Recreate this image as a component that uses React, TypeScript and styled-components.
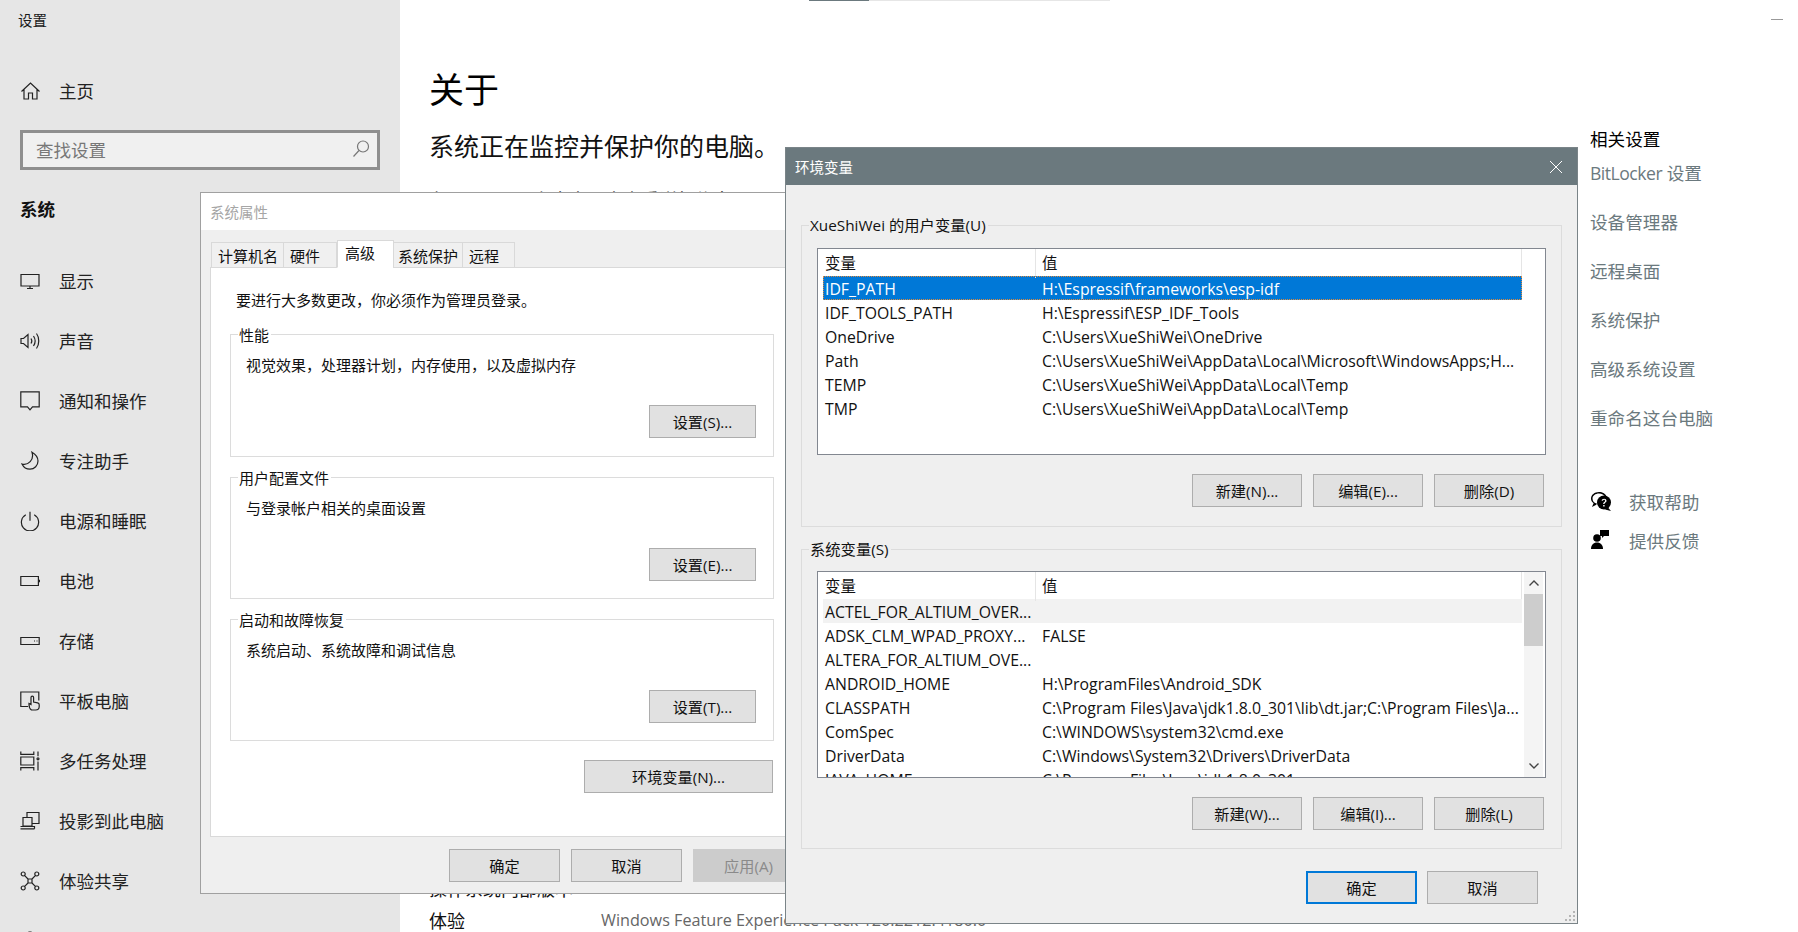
import React from 'react';
import styled, { createGlobalStyle } from 'styled-components';

const UI_FONT = `"Open Sans", "Noto Sans CJK SC", sans-serif`;

const GlobalStyle = createGlobalStyle`
  html, body {
    margin: 0;
    padding: 0;
    background: #fff;
    overflow: hidden;
  }
  * {
    box-sizing: border-box;
  }
  body {
    font-family: ${UI_FONT};
    color: #1a1a1a;
  }
`;

const Shell = styled.div`
  position: relative;
  display: flex;
  width: 1798px;
  height: 932px;
  overflow: hidden;
  background: #fff;
`;

/* settings sidebar */
const Sidebar = styled.nav`
  width: 400px;
  height: 932px;
  flex: none;
  background: #e6e6e6;
  overflow: hidden;
`;

const AppTitle = styled.div`
  height: 40px;
  line-height: 42px;
  padding-left: 18px;
  font-size: 14.5px;
`;

const NavRow = styled.div<{ $first?: boolean }>`
  display: flex;
  align-items: center;
  gap: 19px;
  height: 60px;
  padding-left: 20px;
  font-size: 17.5px;
  color: #222;
  margin-top: ${({ $first }) => ($first ? '21px' : '0')};
`;

const NavLabel = styled.span`
  margin-bottom: 1px;
`;

const SearchBox = styled.div`
  display: flex;
  align-items: center;
  justify-content: space-between;
  width: 360px;
  height: 40px;
  margin: 9px 0 0 20px;
  padding: 0 6px 2px 13px;
  border: 3px solid #8f8f8f;
  background: #f0f0f0;
  font-size: 17.5px;
  color: #777;
`;

const SectionHead = styled.div`
  height: 40px;
  line-height: 40px;
  margin: 19px 0 22px 20px;
  font-size: 17.5px;
  font-weight: 700;
  color: #111;
`;

const Glyph = styled.svg`
  width: 20px;
  height: 20px;
  flex: none;
  fill: none;
  stroke: currentColor;
  stroke-width: 1.2;
`;

const SolidGlyph = styled.svg`
  width: 22px;
  height: 22px;
  flex: none;
  fill: #000;
`;

/* main about page */
const Main = styled.main`
  display: flex;
  flex-direction: column;
  flex: 1;
  height: 932px;
  padding-left: 29px;
  overflow: hidden;
`;

const LoadTrack = styled.div`
  width: 301px;
  height: 1px;
  margin-left: 380px;
  background: #e6e6e6;
`;

const LoadFill = styled.div`
  width: 20%;
  height: 1px;
  background: #6b797e;
`;

const Heading = styled.h1`
  margin: 66px 0 0;
  font-size: 35px;
  line-height: 46px;
  font-weight: 400;
  color: #000;
`;

const SubHeading = styled.div`
  margin-top: 16px;
  font-size: 25px;
  line-height: 34px;
  color: #111;
`;

const SecurityLink = styled.div`
  margin-top: 24px;
  font-size: 18px;
  line-height: 26px;
  color: #333;
`;

const SpecList = styled.div`
  margin-top: auto;
  margin-bottom: -4px;
`;

const SpecRow = styled.div`
  display: flex;
  height: 32px;
  align-items: center;
  font-size: 18px;
`;

const SpecKey = styled.span`
  width: 172px;
  flex: none;
  color: #111;
`;

const SpecValue = styled.span`
  font-size: 16.2px;
  color: #666;
  white-space: nowrap;
`;

/* right hand column */
const Aside = styled.aside`
  width: 238px;
  flex: none;
  padding-left: 30px;
`;

const MinimizeMark = styled.div`
  width: 12px;
  height: 1px;
  margin: 19px 0 0 181px;
  background: #999;
`;

const AsideTitle = styled.div`
  margin-top: 106px;
  font-size: 17.6px;
  line-height: 26px;
  color: #000;
`;

const AsideLinks = styled.div`
  display: flex;
  flex-direction: column;
  gap: 23px;
  margin-top: 8px;
`;

const AsideLink = styled.div`
  font-size: 17.6px;
  line-height: 26px;
  color: #6b797e;
`;

const TightWord = styled.span`
  letter-spacing: -0.5px;
`;

const HelpList = styled.div`
  display: flex;
  flex-direction: column;
  gap: 13px;
  margin-top: 57px;
`;

const HelpRow = styled.div`
  display: flex;
  align-items: center;
  gap: 17px;
  height: 26px;
  font-size: 17.6px;
  color: #6b797e;
`;

/* classic dialogs, free floating over the settings page */
const Dialog = styled.div<{ $left: number; $top: number; $width: number; $height: number; $border: string }>`
  position: absolute;
  left: ${({ $left }) => $left}px;
  top: ${({ $top }) => $top}px;
  width: ${({ $width }) => $width}px;
  height: ${({ $height }) => $height}px;
  display: flex;
  flex-direction: column;
  background: #efefef;
  border: 1px solid ${({ $border }) => $border};
  font-size: 15px;
  color: #111;
`;

const TitleBar = styled.div<{ $active?: boolean }>`
  display: flex;
  align-items: center;
  justify-content: space-between;
  height: 37px;
  flex: none;
  padding: 0 14px 0 9px;
  font-size: 14.5px;
  background: ${({ $active }) => ($active ? '#6b797e' : '#fff')};
  color: ${({ $active }) => ($active ? '#fff' : '#a6a6a6')};
`;

const CloseGlyph = styled.svg`
  width: 14px;
  height: 14px;
  stroke: #fff;
  stroke-width: 1;
  fill: none;
`;

const TabStrip = styled.div`
  display: flex;
  align-items: flex-end;
  height: 28px;
  margin: 10px 0 -1px 11px;
  position: relative;
  z-index: 1;
`;

const Tab = styled.div<{ $active?: boolean; $width: number; $inset: number }>`
  width: ${({ $width }) => $width}px;
  height: ${({ $active }) => ($active ? '28px' : '26px')};
  padding: ${({ $active }) => ($active ? '1px' : '2px')} 0 0 ${({ $inset }) => $inset}px;
  line-height: 23px;
  font-size: 15px;
  background: ${({ $active }) => ($active ? '#fff' : '#f0f0f0')};
  border: 1px solid #d9d9d9;
  border-bottom: ${({ $active }) => ($active ? '1px solid #fff' : '1px solid #d9d9d9')};
  margin-left: ${({ $active }) => ($active ? '0' : '-1px')};
  white-space: nowrap;
`;

const TabPane = styled.div`
  height: 570px;
  margin: 0 10px 0 9px;
  padding: 21px 20px 0 19px;
  background: #fff;
  border: 1px solid #d9d9d9;
`;

const Notice = styled.div`
  height: 20px;
  line-height: 22px;
  margin: 0 0 25px 6px;
`;

const GroupStack = styled.div`
  display: flex;
  flex-direction: column;
  gap: 20px;
`;

const Group = styled.section<{ $height: number }>`
  display: flex;
  flex-direction: column;
  height: ${({ $height }) => $height}px;
  border: 1px solid #dcdcdc;
`;

const Legend = styled.div<{ $bg: string }>`
  width: fit-content;
  height: 20px;
  line-height: 18px;
  margin: -10px 0 0 7px;
  padding: 0 2px 0 1px;
  font-size: 15.3px;
  background: ${({ $bg }) => $bg};
`;

const PaneLegend = styled(Legend)`
  font-size: 15px;
  line-height: 20px;
`;

const GroupText = styled.div`
  height: 20px;
  line-height: 22px;
  margin: 9px 0 0 15px;
`;

const Button = styled.div<{ $width?: number; $primary?: boolean; $disabled?: boolean }>`
  display: flex;
  align-items: center;
  justify-content: center;
  width: ${({ $width }) => $width ?? 111}px;
  height: 33px;
  padding-bottom: 2px;
  flex: none;
  font-size: 15.2px;
  background: ${({ $disabled }) => ($disabled ? '#cccccc' : '#e1e1e1')};
  color: ${({ $disabled }) => ($disabled ? '#8a8a8a' : '#111')};
  border: ${({ $primary, $disabled }) =>
    $primary ? '2px solid #0078d7' : $disabled ? '1px solid #cccccc' : '1px solid #adadad'};
  white-space: nowrap;
`;

const GroupAction = styled.div<{ $bottom: number }>`
  margin: auto 17px ${({ $bottom }) => $bottom}px auto;
`;

const EnvAction = styled.div`
  display: flex;
  justify-content: flex-end;
  margin: 19px 1px 0 0;
`;

const SysFooter = styled.div`
  display: flex;
  gap: 11px;
  margin: 12px 0 0 248px;
`;

const EnvBody = styled.div`
  display: flex;
  flex-direction: column;
  gap: 22px;
  padding: 40px 15px 0 15px;
`;

const ListBox = styled.div<{ $gap: number }>`
  display: flex;
  width: 729px;
  height: 207px;
  margin: ${({ $gap }) => $gap}px 0 0 15px;
  flex: none;
  background: #fff;
  border: 1px solid #828790;
  overflow: hidden;
`;

const ListTable = styled.div`
  width: 699px;
  margin-left: 5px;
  flex: none;
`;

const ListHead = styled.div`
  display: grid;
  grid-template-columns: 213px 1fr;
  height: 27px;
  line-height: 29px;
  font-size: 15.4px;
  border-right: 1px solid #e5e5e5;
`;

const HeadCell = styled.div<{ $second?: boolean }>`
  padding-left: ${({ $second }) => ($second ? '6px' : '2px')};
  border-right: ${({ $second }) => ($second ? 'none' : '1px solid #e5e5e5')};
`;

const ListRow = styled.div<{ $state?: 'selected' | 'hover' }>`
  display: grid;
  grid-template-columns: 213px 1fr;
  height: 24px;
  line-height: 26px;
  font-size: 15.8px;
  white-space: nowrap;
  background: ${({ $state }) => ($state === 'selected' ? '#0078d7' : $state === 'hover' ? '#f2f2f2' : 'transparent')};
  color: ${({ $state }) => ($state === 'selected' ? '#fff' : '#111')};
  outline: ${({ $state }) => ($state === 'selected' ? '1px dotted #e08a3c' : 'none')};
  outline-offset: -1px;
`;

const RowName = styled.div`
  padding-left: 2px;
`;

const RowValue = styled.div`
  padding-left: 6px;
`;

const ScrollBar = styled.div`
  display: flex;
  flex-direction: column;
  width: 19px;
  margin-left: 2px;
  flex: none;
  background: #f4f4f4;
`;

const ScrollArrow = styled.div<{ $end?: boolean }>`
  display: flex;
  align-items: center;
  justify-content: center;
  height: 22px;
  flex: none;
  margin-top: ${({ $end }) => ($end ? 'auto' : '0')};
`;

const ScrollThumb = styled.div`
  height: 52px;
  flex: none;
  background: #cdcdcd;
`;

const Chevron = styled.svg`
  width: 12px;
  height: 8px;
  fill: none;
  stroke: #444;
  stroke-width: 1.4;
`;

const ListActions = styled.div`
  display: flex;
  justify-content: flex-end;
  gap: 11px;
  margin: 19px 17px 0 0;
`;

const EnvFooter = styled.div`
  display: flex;
  justify-content: flex-end;
  gap: 10px;
  margin: 22px 39px 0 0;
`;

const ResizeGrip = styled.svg`
  position: absolute;
  right: 1px;
  bottom: 1px;
  width: 12px;
  height: 12px;
  fill: #b5b5b5;
`;

const navItems: { label: string; d: string }[] = [
  { label: '显示', d: 'M1 3.5h18v11.5H1z M7 17.5h6 M10 15v2.5' },
  { label: '声音', d: 'M1 7.5h2.5L8 3.5v13l-4.5-4H1z M11 7.5c1 1.5 1 3.5 0 5 M13.5 5c2 3 2 7 0 10 M16.5 2.5c3 4 3 11 0 15' },
  { label: '通知和操作', d: 'M.8.8h18.4v15h-6.7L10 18.8l-2.5-3H.8z' },
  { label: '专注助手', d: 'M12 1.2c3.5 2 6 4.8 6 8.8 0 4.5-3.5 8.2-8 8.2-3.5 0-6.5-2-8-5.2 6 1.5 12.5-4 10-11.8z' },
  { label: '电源和睡眠', d: 'M10 .8v9 M5.8 3.8a8.6 8.6 0 1 0 8.4 0' },
  { label: '电池', d: 'M.8 5.5h17.6v9H.8z M19.4 8.8v2.4' },
  { label: '存储', d: 'M.8 6.5h18.4v7H.8z M14 10h1 M16.5 10h1' },
  { label: '平板电脑', d: 'M8 15.5H.8V1h18v8.5 M11.5 19c-1.5-1-2.5-3-2.5-5.5v-1l2 1V6.5a1.3 1.3 0 0 1 2.6 0V11l4 .8c1 .2 1.6 1 1.6 2v1.7c0 2-1.5 3.5-3.5 3.5z' },
  { label: '多任务处理', d: 'M.8.6v2.8h13V.6 M.8 6h13v8H.8z M.8 19.4v-2.8h13v2.8 M18 .6v4.6 M18 10.5v8.9 M17 7.8a1 1 0 1 0 2 0 1 1 0 1 0-2 0z' },
  { label: '投影到此电脑', d: 'M7 6V1.5h12v11h-7.5 M3 6.5h9v8.5H3z M.5 17.8h14 M.5 15.5h14v2.3' },
  { label: '体验共享', d: 'M8 8h4v4H8z M8 8L4.2 4.2 M12 8l3.8-3.8 M8 12l-3.8 3.8 M12 12l3.8 3.8 M1.2 3a2 2 0 1 0 4 0 2 2 0 1 0-4 0z M14.8 3a2 2 0 1 0 4 0 2 2 0 1 0-4 0z M1.2 17a2 2 0 1 0 4 0 2 2 0 1 0-4 0z M14.8 17a2 2 0 1 0 4 0 2 2 0 1 0-4 0z' },
  { label: '剪贴板', d: 'M9 1h2v2H9z M3 3h14v16H3z' },
];

const asideLinks = ['设备管理器', '远程桌面', '系统保护', '高级系统设置', '重命名这台电脑'];

const tabs = [
  { label: '计算机名', width: 73, inset: 6 },
  { label: '硬件', width: 54, inset: 6 },
  { label: '高级', width: 57, inset: 7, active: true },
  { label: '系统保护', width: 70, inset: 4 },
  { label: '远程', width: 53, inset: 6 },
];

const adminNotice = '要进行大多数更改\uFF0C你必须作为管理员登录。';

const sysGroups = [
  {
    title: '性能',
    text: '视觉效果\uFF0C处理器计划\uFF0C内存使用\uFF0C以及虚拟内存',
    action: '设置(S)...',
    height: 123,
    bottom: 18,
  },
  { title: '用户配置文件', text: '与登录帐户相关的桌面设置', action: '设置(E)...', height: 122, bottom: 17 },
  { title: '启动和故障恢复', text: '系统启动、系统故障和调试信息', action: '设置(T)...', height: 122, bottom: 17 },
];

const userVars = [
  ['IDF_PATH', 'H:\\Espressif\\frameworks\\esp-idf'],
  ['IDF_TOOLS_PATH', 'H:\\Espressif\\ESP_IDF_Tools'],
  ['OneDrive', 'C:\\Users\\XueShiWei\\OneDrive'],
  ['Path', 'C:\\Users\\XueShiWei\\AppData\\Local\\Microsoft\\WindowsApps;H...'],
  ['TEMP', 'C:\\Users\\XueShiWei\\AppData\\Local\\Temp'],
  ['TMP', 'C:\\Users\\XueShiWei\\AppData\\Local\\Temp'],
];

const systemVars = [
  ['ACTEL_FOR_ALTIUM_OVER...', ''],
  ['ADSK_CLM_WPAD_PROXY...', 'FALSE'],
  ['ALTERA_FOR_ALTIUM_OVE...', ''],
  ['ANDROID_HOME', 'H:\\ProgramFiles\\Android_SDK'],
  ['CLASSPATH', 'C:\\Program Files\\Java\\jdk1.8.0_301\\lib\\dt.jar;C:\\Program Files\\Ja...'],
  ['ComSpec', 'C:\\WINDOWS\\system32\\cmd.exe'],
  ['DriverData', 'C:\\Windows\\System32\\Drivers\\DriverData'],
  ['JAVA_HOME', 'C:\\Program Files\\Java\\jdk1.8.0_301'],
];

const VarList: React.FC<{ rows: string[][]; gap: number; highlight: 'selected' | 'hover'; scroll?: boolean }> = ({
  rows,
  gap,
  highlight,
  scroll,
}) => (
  <ListBox $gap={gap}>
    <ListTable>
      <ListHead>
        <HeadCell>变量</HeadCell>
        <HeadCell $second>值</HeadCell>
      </ListHead>
      {rows.map(([name, value], index) => (
        <ListRow key={name} $state={index === 0 ? highlight : undefined}>
          <RowName>{name}</RowName>
          <RowValue>{value}</RowValue>
        </ListRow>
      ))}
    </ListTable>
    {scroll && (
      <ScrollBar>
        <ScrollArrow>
          <Chevron viewBox="0 0 12 8">
            <path d="M1.5 6.5L6 2l4.5 4.5" />
          </Chevron>
        </ScrollArrow>
        <ScrollThumb />
        <ScrollArrow $end>
          <Chevron viewBox="0 0 12 8">
            <path d="M1.5 1.5L6 6l4.5-4.5" />
          </Chevron>
        </ScrollArrow>
      </ScrollBar>
    )}
  </ListBox>
);

const App: React.FC = () => (
  <Shell>
    <GlobalStyle />
    <Sidebar>
      <AppTitle>设置</AppTitle>
      <NavRow $first>
        <Glyph viewBox="0 0 20 20">
          <path d="M1.5 10.5L10.5 2l9 8.5 M4 8.5V18h4.5v-6h4v6H17V8.5" />
        </Glyph>
        <NavLabel>主页</NavLabel>
      </NavRow>
      <SearchBox>
        查找设置
        <Glyph viewBox="0 0 20 20">
          <circle cx="12" cy="7.5" r="5.5" />
          <path d="M8 11.5l-5.5 6" />
        </Glyph>
      </SearchBox>
      <SectionHead>系统</SectionHead>
      {navItems.map(item => (
        <NavRow key={item.label}>
          <Glyph viewBox="0 0 20 20">
            <path d={item.d} />
          </Glyph>
          <NavLabel>{item.label}</NavLabel>
        </NavRow>
      ))}
    </Sidebar>

    <Main>
      <LoadTrack>
        <LoadFill />
      </LoadTrack>
      <Heading>关于</Heading>
      <SubHeading>系统正在监控并保护你的电脑。</SubHeading>
      <SecurityLink>在 Windows 安全中心中查看详细信息</SecurityLink>
      <SpecList>
        <SpecRow>
          <SpecKey>操作系统内部版本</SpecKey>
          <SpecValue>19044.1415</SpecValue>
        </SpecRow>
        <SpecRow>
          <SpecKey>体验</SpecKey>
          <SpecValue>Windows Feature Experience Pack 120.2212.4180.0</SpecValue>
        </SpecRow>
      </SpecList>
    </Main>

    <Aside>
      <MinimizeMark />
      <AsideTitle>相关设置</AsideTitle>
      <AsideLinks>
        <AsideLink>
          <TightWord>BitLocker</TightWord> 设置
        </AsideLink>
        {asideLinks.map(link => (
          <AsideLink key={link}>{link}</AsideLink>
        ))}
      </AsideLinks>
      <HelpList>
        <HelpRow>
          <SolidGlyph viewBox="0 0 22 22">
            <path d="M9 2C4.6 2 1 4.9 1 8.5c0 1.9 1 3.6 2.6 4.8L2 17l4.3-2.2.6-1.3C4.3 13.3 2.5 11.2 2.5 8.5 2.5 5.7 5.4 3.500 9 3.500c2.800 0 5.200 1.300 6.100 3.300h1.600C15.700 4 12.600 2 9 2z" />
            <circle cx="14" cy="12.5" r="7" />
            <path d="M18 17.5l3 3.5-6-1.500z" />
            <path
              d="M11.600 10.600c.2-1.200 1.200-1.900 2.500-1.900 1.400 0 2.400.8 2.400 2 0 1-.6 1.500-1.300 2-.5.4-.7.6-.7 1.200h-1.300c0-1 .4-1.500 1-2 .6-.4.900-.7.900-1.200s-.4-.9-1-.9c-.7 0-1.100.4-1.200 1z M13.200 15h1.400v1.400h-1.400z"
              fill="#fff"
            />
          </SolidGlyph>
          获取帮助
        </HelpRow>
        <HelpRow>
          <SolidGlyph viewBox="0 0 22 22">
            <circle cx="7" cy="9" r="3.800" />
            <path d="M1 20c0-4 2.500-6.500 6-6.500s6 2.500 6 6.500z" />
            <path d="M10 1h9v6h-5l-2 2V7h-2z" />
          </SolidGlyph>
          提供反馈
        </HelpRow>
      </HelpList>
    </Aside>

    <Dialog $left={200} $top={192} $width={606} $height={702} $border="#a0a0a0">
      <TitleBar>系统属性</TitleBar>
      <TabStrip>
        {tabs.map(tab => (
          <Tab key={tab.label} $active={tab.active} $width={tab.width} $inset={tab.inset}>
            {tab.label}
          </Tab>
        ))}
      </TabStrip>
      <TabPane>
        <Notice>{adminNotice}</Notice>
        <GroupStack>
          {sysGroups.map(group => (
            <Group key={group.title} $height={group.height}>
              <PaneLegend $bg="#fff">{group.title}</PaneLegend>
              <GroupText>{group.text}</GroupText>
              <GroupAction $bottom={group.bottom}>
                <Button $width={107}>{group.action}</Button>
              </GroupAction>
            </Group>
          ))}
        </GroupStack>
        <EnvAction>
          <Button $width={189}>环境变量(N)...</Button>
        </EnvAction>
      </TabPane>
      <SysFooter>
        <Button>确定</Button>
        <Button>取消</Button>
        <Button $disabled>应用(A)</Button>
      </SysFooter>
    </Dialog>

    <Dialog $left={785} $top={147} $width={793} $height={777} $border="#7a8488">
      <TitleBar $active>
        环境变量
        <CloseGlyph viewBox="0 0 14 14">
          <path d="M1 1l12 12 M13 1L1 13" />
        </CloseGlyph>
      </TitleBar>
      <EnvBody>
        <Group $height={302}>
          <Legend $bg="#efefef">XueShiWei 的用户变量(U)</Legend>
          <VarList rows={userVars} gap={12} highlight="selected" />
          <ListActions>
            <Button $width={110}>新建(N)...</Button>
            <Button $width={110}>编辑(E)...</Button>
            <Button $width={110}>删除(D)</Button>
          </ListActions>
        </Group>
        <Group $height={300}>
          <Legend $bg="#efefef">系统变量(S)</Legend>
          <VarList rows={systemVars} gap={11} highlight="hover" scroll />
          <ListActions>
            <Button $width={110}>新建(W)...</Button>
            <Button $width={110}>编辑(I)...</Button>
            <Button $width={110}>删除(L)</Button>
          </ListActions>
        </Group>
      </EnvBody>
      <EnvFooter>
        <Button $primary>确定</Button>
        <Button>取消</Button>
      </EnvFooter>
      <ResizeGrip viewBox="0 0 12 12">
        <path d="M9 1h2v2H9z M5 5h2v2H5z M9 5h2v2H9z M1 9h2v2H1z M5 9h2v2H5z M9 9h2v2H9z" />
      </ResizeGrip>
    </Dialog>
  </Shell>
);

export default App;
